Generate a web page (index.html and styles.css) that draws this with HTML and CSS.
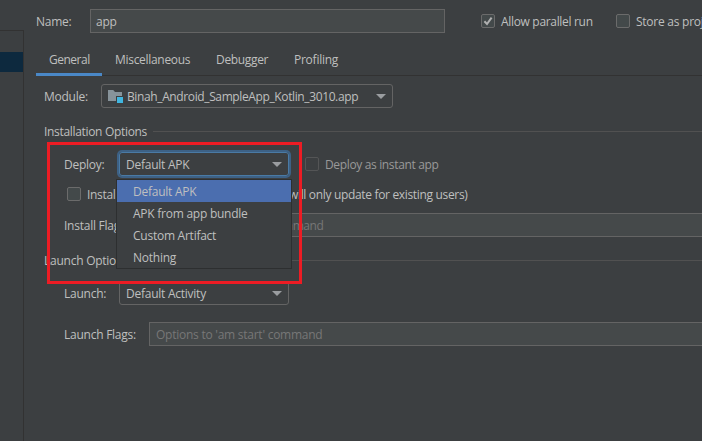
FILE: index.html
```html
<!DOCTYPE html>
<html lang="en">
<head>
<meta charset="utf-8">
<title>Run Configurations</title>
<link rel="stylesheet" href="styles.css">
</head>
<body>
<div class="dialog">
  <aside class="tree"><div class="tree-view"><div class="tree-selected"></div></div></aside>
  <main class="editor">
    <div class="row row-name">
      <span class="label name-label t-name">Name:</span>
      <div class="field name-field"><span>app</span></div>
      <span class="check"><svg viewBox="0 0 14 14"><path d="M3.4 7.2 6 10 10.6 3.7"/></svg></span>
      <span class="check-label parallel">Allow parallel run</span>
      <span class="check"></span>
      <span class="check-label store">Store as project file</span>
    </div>
    <nav class="tabs">
      <span class="tab active t-gen">General</span>
      <span class="tab t-misc">Miscellaneous</span>
      <span class="tab t-debug">Debugger</span>
      <span class="tab t-prof">Profiling</span>
    </nav>
    <div class="row row-module">
      <span class="label module-label t-module">Module:</span>
      <div class="combo module-combo">
        <svg class="folder" viewBox="0 0 16 16"><path class="folder-body" d="M1 2H6.2L8 4H15V8H9V13H1Z"/><path class="folder-badge" d="M10 9H16V15H10Z"/></svg>
        <span class="t-binah">Binah_Android_SampleApp_Kotlin_3010.app</span>
        <i class="arrow"></i>
      </div>
    </div>
    <div class="section section-install"><span class="t-inst">Installation Options</span><hr></div>
    <div class="row row-deploy">
      <span class="label option-label t-deploy">Deploy:</span>
      <div class="combo option-combo focused"><span class="t-defapk">Default APK</span><i class="arrow"></i>
        <div class="popup">
          <div class="item selected t-defapk">Default APK</div>
          <div class="item t-bundle">APK from app bundle</div>
          <div class="item t-custom">Custom Artifact</div>
          <div class="item t-nothing">Nothing</div>
        </div>
      </div>
      <span class="check disabled"></span>
      <span class="check-label muted t-instant">Deploy as instant app</span>
    </div>
    <div class="row row-users">
      <span class="check"></span>
      <span class="check-label t-users">Install for all users (if already installed, will only update for existing users)</span>
    </div>
    <div class="row row-install-flags">
      <span class="label flags-label t-iflags">Install Flags:</span>
      <div class="field flags-field"><span class="placeholder t-pm">Options to 'pm install' command</span></div>
    </div>
    <div class="section section-launch"><span class="t-lopt">Launch Options</span><hr></div>
    <div class="row row-launch">
      <span class="label option-label t-launch">Launch:</span>
      <div class="combo option-combo"><span class="t-activity">Default Activity</span><i class="arrow"></i></div>
    </div>
    <div class="row row-launch-flags">
      <span class="label flags-label t-lflags">Launch Flags:</span>
      <div class="field flags-field"><span class="placeholder t-am">Options to 'am start' command</span></div>
    </div>
  </main>
  <div class="highlight"></div>
</div>
</body>
</html>
```
FILE: styles.css
```css
* { box-sizing: border-box; }
body { margin: 0; background: #3c3f41; color: #bfbfbf; font: 12px/16px "Open Sans", "Noto Sans", sans-serif; letter-spacing: -0.25px; }
.dialog { position: relative; display: flex; width: 702px; height: 441px; overflow: hidden; white-space: nowrap; }
.tree { flex: none; width: 24px; padding-top: 30px; }
.tree-view { height: 411px; padding-top: 21px; border-top: 1px solid #323232; border-right: 1px solid #323232; }
.tree-selected { height: 20px; background: #0d293e; }
.editor { flex: 1; min-width: 0; display: flex; flex-direction: column; }
.row { flex: none; display: flex; align-items: center; }
.label { flex: none; }
.label, .check-label, .combo > span, .field > span { padding-top: 2px; }
.row-name { height: 42px; padding-left: 12px; }
.name-label { width: 54px; }
.field { flex: none; display: flex; align-items: center; height: 24px; padding-left: 6px; background: #45494a; border: 1px solid #646464; }
.name-field { width: 355px; margin-right: 36px; padding-left: 5px; }
.check { flex: none; width: 14px; height: 14px; border: 1px solid #6b6b6b; border-radius: 2px; background: #43494a; }
.check svg { display: block; width: 14px; height: 14px; margin: -1px; fill: none; stroke: #b0b0b0; stroke-width: 2; }
.check.disabled { background: transparent; border-color: #545556; }
.check-label { flex: none; margin-left: 6px; }
.parallel { width: 115px; letter-spacing: -0.32px; }
.muted { color: #999999; }
.tabs { flex: none; display: flex; height: 34px; margin-left: 12px; border-bottom: 1px solid #323232; }
.tab { flex: none; height: 34px; padding: 10px 13px 0; }
.tab.active { border-bottom: 3px solid #4a88c7; }
.t-gen { width: 66px; letter-spacing: -0.5px; }
.t-misc { width: 101px; letter-spacing: -0.3px; }
.t-debug { width: 78px; letter-spacing: -0.33px; }
.t-binah { letter-spacing: -0.38px; }
.t-inst { width: 103px; letter-spacing: -0.32px; }
.t-instant { letter-spacing: -0.35px; }
.t-users { letter-spacing: -0.33px; }
.t-pm { letter-spacing: -0.46px; }
.row-module { height: 40px; padding-left: 20px; }
.module-label { width: 57px; }
.combo { flex: none; position: relative; display: flex; align-items: center; height: 24px; padding: 0 6px; border: 1px solid #646464; border-radius: 3px; }
.module-combo { width: 292px; padding-left: 5px; }
.folder { flex: none; width: 16px; height: 16px; margin-right: 4px; }
.folder-body { fill: #87939a; }
.folder-badge { fill: #40b6e0; }
.arrow { margin-left: auto; border: solid transparent; border-width: 5px 5px 0; border-top-color: #9a9da0; }
.option-combo { width: 170px; }
.focused { border-color: #4a7aa4; box-shadow: 0 0 0 2px #3d6185; }
.section { flex: none; display: flex; align-items: center; padding-left: 20px; }
.section hr { flex: 1; height: 1px; margin: 0 0 1px 6px; border: 0; background: #515151; }
.section-install { height: 32px; }
.section-launch { height: 37px; }
.row-deploy { height: 32px; padding-left: 40px; }
.option-label { width: 55px; }
.row-deploy .check { margin-left: 16px; }
.row-users { height: 28px; padding-left: 43px; }
.row-install-flags { height: 34px; padding-left: 40px; }
.flags-label { width: 85px; }
.flags-field { width: 600px; }
.placeholder { color: #777777; }
.row-launch { height: 28px; padding-left: 40px; }
.row-launch-flags { height: 54px; padding-left: 40px; }
.popup { position: absolute; z-index: 1; top: 26px; left: -4px; width: 176px; height: 90px; border: 1px solid #2d2f30; background: #3c3f41; }
.item { height: 22px; padding: 4px 0 0 16px; }
.item.selected { background: #4b6eaf; }
.highlight { position: absolute; z-index: 2; left: 47px; top: 142px; width: 255px; height: 142px; border: 3px solid #ed1c24; }
```
